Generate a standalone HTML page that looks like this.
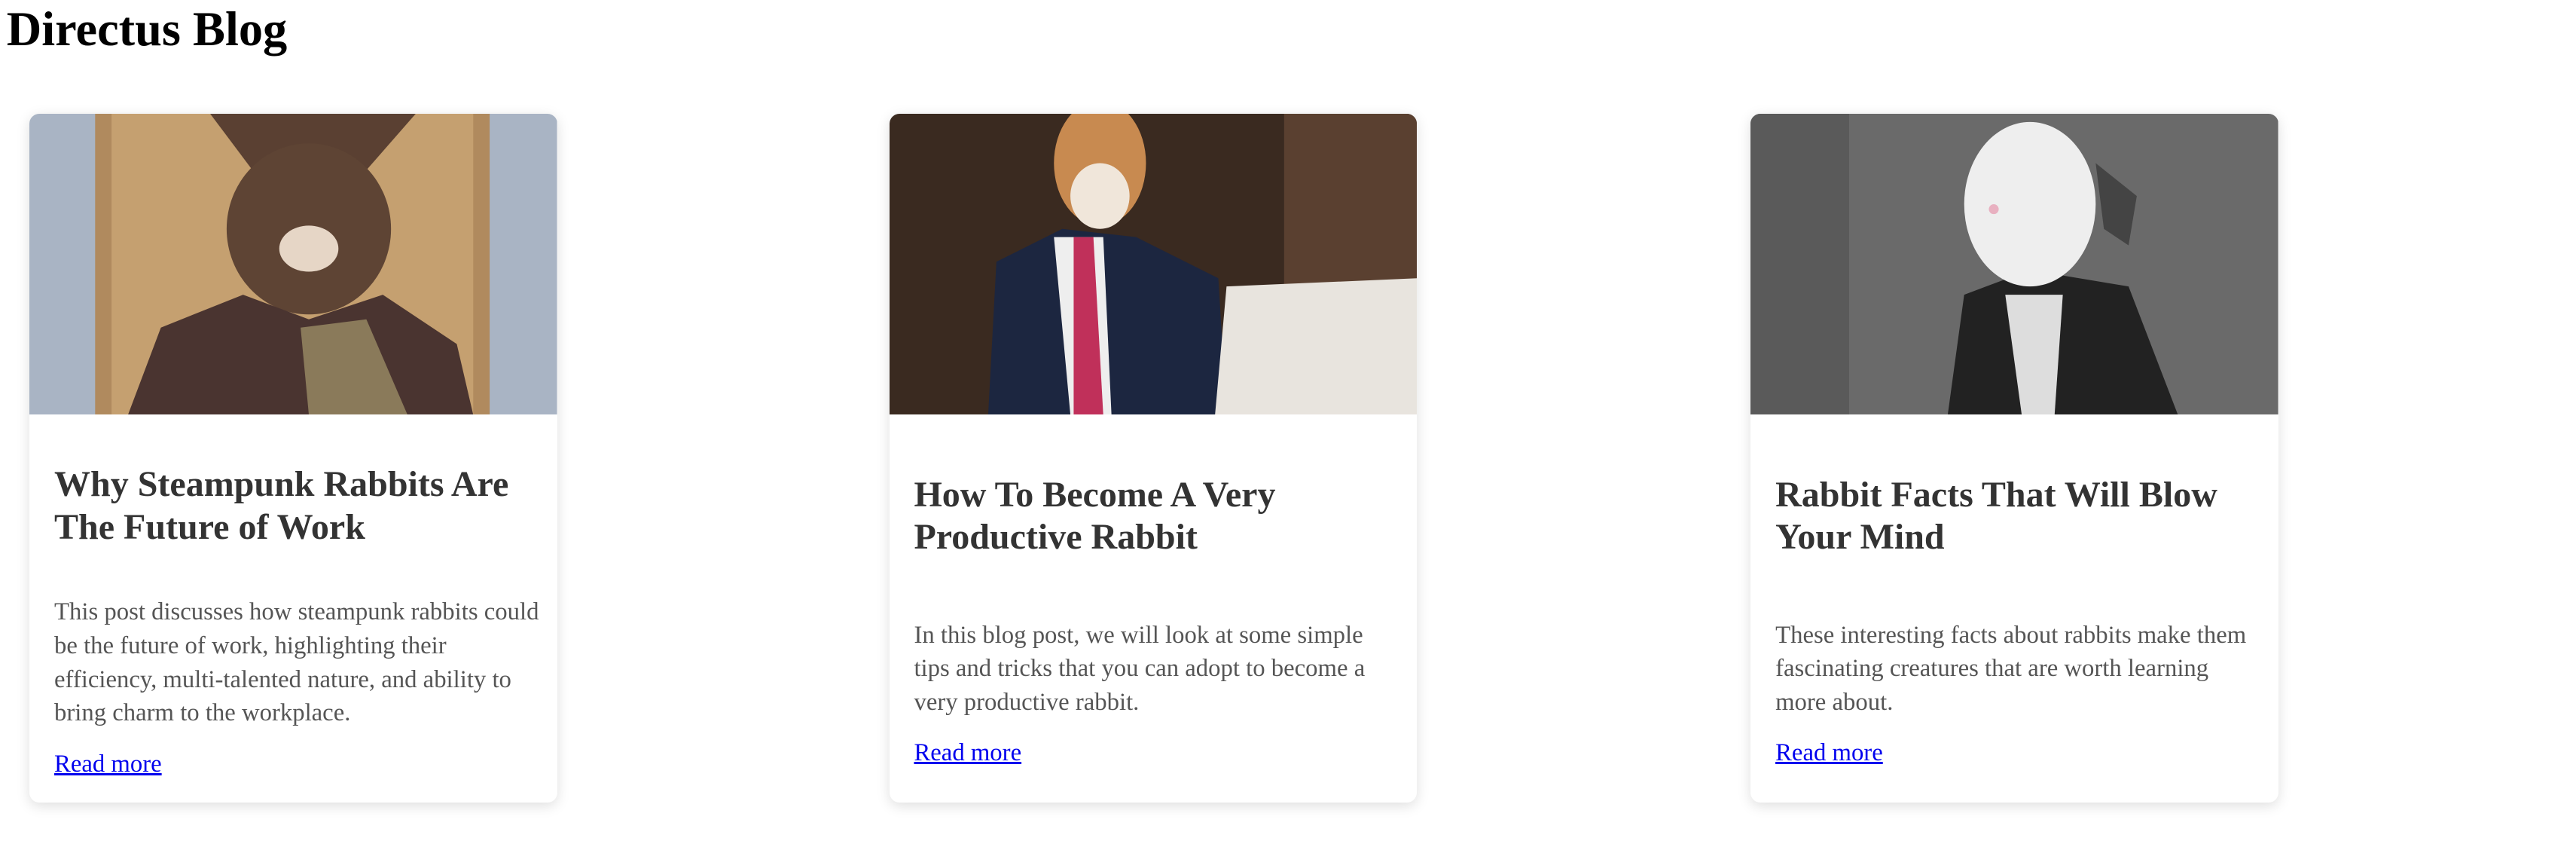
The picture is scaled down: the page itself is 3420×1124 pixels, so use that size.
<!DOCTYPE html>
<html><head><meta charset="utf-8"><style>
html,body{margin:0;padding:0;background:#fff}
body{width:3420px;height:1122px;overflow:hidden;position:relative;font-family:"Liberation Serif",serif}
#z{zoom:2.1825;position:relative;width:1567px;height:515px}
h1{position:absolute;left:4px;top:1px;margin:0;font-size:29.5px;line-height:34px;font-weight:bold;color:#000}
.card{position:absolute;top:69px;width:321px;height:419px;background:#fff;border-radius:6px;overflow:hidden;box-shadow:0 2px 8px rgba(0,0,0,.13)}
.img{position:absolute;left:0;top:0;width:321px;height:183px}
.t{position:absolute;left:15px;width:295px;margin:0;font-size:22px;line-height:26px;font-weight:bold;color:#333}
.d{position:absolute;left:15px;width:295px;margin:0;font-size:15px;line-height:20.5px;color:#555}
.r{position:absolute;left:15px;font-size:15px;line-height:20px;color:#00e;text-decoration:underline}
</style></head><body><div id="z">
<h1>Directus Blog</h1>

<div class="card" style="left:18px">
<svg class="img" viewBox="0 0 321 183" preserveAspectRatio="none">
<rect width="321" height="183" fill="#a9b4c4"/>
<rect x="40" y="0" width="240" height="183" fill="#b08a5e"/>
<rect x="50" y="0" width="220" height="183" fill="#c5a070"/>
<path d="M110 0 L140 40 L200 40 L235 0 Z" fill="#5a4032"/>
<ellipse cx="170" cy="70" rx="50" ry="52" fill="#5e4434"/>
<ellipse cx="170" cy="82" rx="18" ry="14" fill="#e6d6c6"/>
<path d="M60 183 L80 130 L130 110 L170 125 L215 110 L260 140 L270 183 Z" fill="#4a3430"/>
<path d="M165 130 L205 125 L230 183 L170 183 Z" fill="#8a7a5a"/>
</svg>
<p class="t" style="top:213px">Why Steampunk Rabbits Are The Future of Work</p>
<p class="d" style="top:293px">This post discusses how steampunk rabbits could be the future of work, highlighting their efficiency, multi-talented nature, and ability to bring charm to the workplace.</p>
<a class="r" style="top:386px">Read more</a>
</div>

<div class="card" style="left:541px">
<svg class="img" viewBox="0 0 321 183" preserveAspectRatio="none">
<rect width="321" height="183" fill="#3a2a20"/>
<rect x="240" y="0" width="81" height="183" fill="#5a4030"/>
<path d="M60 183 L65 90 L105 70 L150 75 L200 100 L205 183 Z" fill="#1c2640"/>
<path d="M100 75 L130 75 L135 183 L110 183 Z" fill="#eee"/>
<path d="M112 75 L124 75 L130 183 L112 183 Z" fill="#c0305a"/>
<ellipse cx="128" cy="30" rx="28" ry="38" fill="#c88a50"/>
<ellipse cx="128" cy="50" rx="18" ry="20" fill="#f0e6da"/>
<path d="M198 183 L205 105 L321 100 L321 183 Z" fill="#e8e4de"/>
</svg>
<p class="t" style="top:219px">How To Become A Very Productive Rabbit</p>
<p class="d" style="top:307px">In this blog post, we will look at some simple tips and tricks that you can adopt to become a very productive rabbit.</p>
<a class="r" style="top:379px">Read more</a>
</div>

<div class="card" style="left:1065px">
<svg class="img" viewBox="0 0 321 183" preserveAspectRatio="none">
<rect width="321" height="183" fill="#6a6a6a"/>
<rect x="0" y="0" width="60" height="183" fill="#5a5a5a"/>
<path d="M120 183 L130 110 L170 95 L230 105 L260 183 Z" fill="#222"/>
<path d="M155 110 L190 110 L185 183 L165 183 Z" fill="#ddd"/>
<ellipse cx="170" cy="55" rx="40" ry="50" fill="#eee"/>
<path d="M210 30 L235 50 L230 80 L215 70 Z" fill="#444"/>
<circle cx="148" cy="58" r="3" fill="#e8b0c0"/>
</svg>
<p class="t" style="top:219px">Rabbit Facts That Will Blow Your Mind</p>
<p class="d" style="top:307px">These interesting facts about rabbits make them fascinating creatures that are worth learning more about.</p>
<a class="r" style="top:379px">Read more</a>
</div>
</div></body></html>
